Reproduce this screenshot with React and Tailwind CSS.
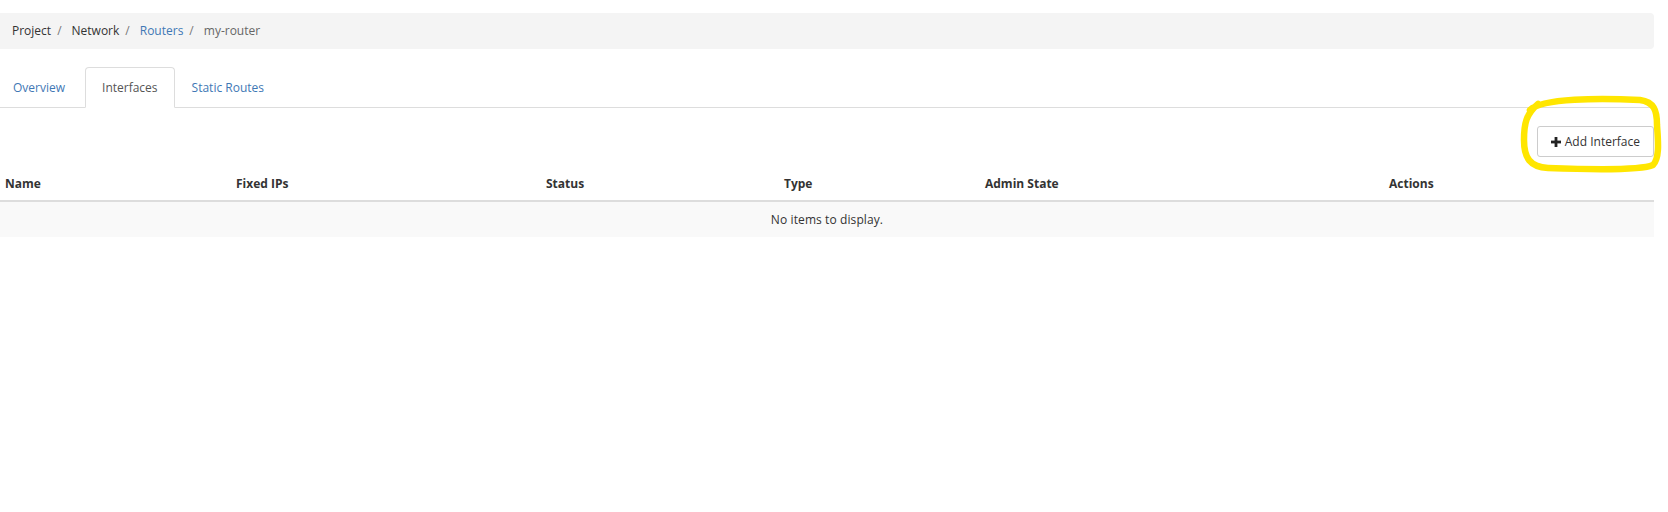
import React from "react";

function Sep() {
  return <span className="ml-[6px] mr-[10px] text-[#777]">/</span>;
}

function PlusIcon() {
  return (
    <svg width="10" height="10" viewBox="0 0 10 10" className="mr-[4px]">
      <rect x="3.6" y="0" width="2.8" height="10" fill="#222" />
      <rect x="0" y="3.6" width="10" height="2.8" fill="#222" />
    </svg>
  );
}

export default function App() {
  const cols = [
    { label: "Name", w: "w-[231px]" },
    { label: "Fixed IPs", w: "w-[310px]" },
    { label: "Status", w: "w-[238px]" },
    { label: "Type", w: "w-[201px]" },
    { label: "Admin State", w: "w-[404px]" },
    { label: "Actions", w: "flex-1" },
  ];
  return (
    <div
      className="relative w-[1668px] h-[512px] bg-white text-[12px] text-[#333] overflow-hidden"
      style={{ fontFamily: '"Open Sans", "Liberation Sans", sans-serif' }}
    >
      <div className="w-[1654px]">
        {/* Breadcrumb */}
        <div className="mt-[13px] h-[36px] bg-[#f4f4f4] rounded-r-[4px] flex items-center pl-[12px]">
          <span className="text-[#333]">Project</span>
          <Sep />
          <span className="text-[#333]">Network</span>
          <Sep />
          <span className="text-[#3f78b5]">Routers</span>
          <Sep />
          <span className="text-[#666]">my-router</span>
        </div>

        {/* Tabs */}
        <div className="mt-[18px] h-[41px] border-b border-[#dddddd] flex items-end ml-[-3px]">
          <div className="h-[40px] px-[16px] mr-[4px] flex items-center text-[#3f78b5] mb-[-1px]">
            Overview
          </div>
          <div className="h-[41px] px-[16px] mr-[1px] flex items-center text-[#555] bg-white border border-[#dddddd] border-b-white rounded-t-[4px] mb-[-1px]">
            Interfaces
          </div>
          <div className="h-[40px] px-[16px] flex items-center text-[#3f78b5] mb-[-1px]">
            Static Routes
          </div>
        </div>

        {/* Button row */}
        <div className="mt-[18px] flex justify-end">
          <button className="h-[31px] px-[13px] flex items-center border border-[#cccccc] rounded-[3px] bg-white text-[#333] text-[12px]">
            <PlusIcon />
            Add Interface
          </button>
        </div>

        {/* Table */}
        <div className="mt-[10px]">
          <div className="flex h-[35px] items-center border-b-2 border-[#dddddd] font-bold text-[#333]">
            {cols.map((c) => (
              <div key={c.label} className={`${c.w} pl-[5px]`}>
                {c.label}
              </div>
            ))}
          </div>
          <div className="h-[35px] bg-[#f9f9f9] flex items-center justify-center text-[#333] tracking-[0.1px]">
            No items to display.
          </div>
        </div>
      </div>

      {/* Hand-drawn yellow annotation */}
      <svg
        className="absolute left-0 top-0 pointer-events-none"
        width="1668"
        height="512"
        viewBox="0 0 1668 512"
      >
        <path
          d="M1530 110 C1542 98, 1600 98, 1640 100 C1654 102, 1657 110, 1657 125 C1658 140, 1660 158, 1653 165 C1640 171, 1575 169, 1548 168 C1530 167, 1524 158, 1524 140 C1524 124, 1526 114, 1538 104"
          fill="none"
          stroke="#ffe600"
          strokeWidth="6.5"
          strokeLinecap="round"
          strokeLinejoin="round"
        />
      </svg>
    </div>
  );
}
